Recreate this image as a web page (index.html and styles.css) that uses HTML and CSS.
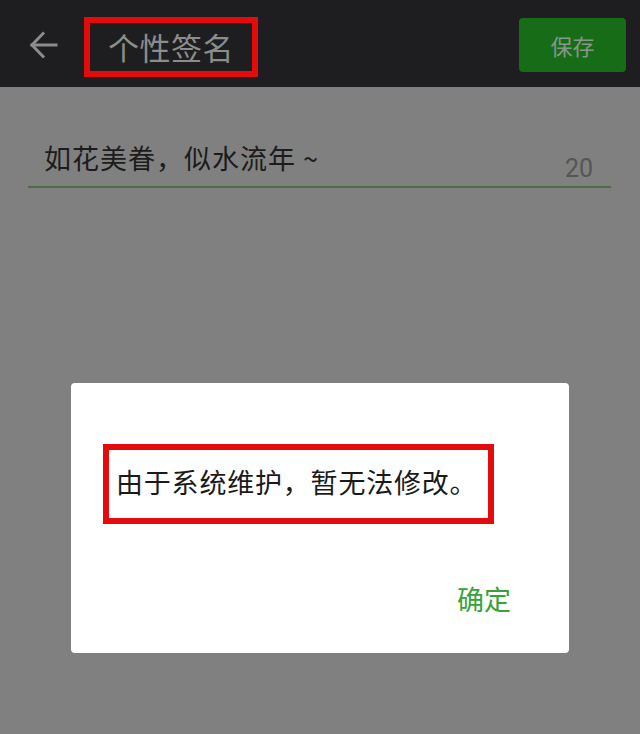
FILE: index.html
```html
<!DOCTYPE html>
<html lang="zh-CN">
<head>
<meta charset="utf-8">
<title>个性签名</title>
<link rel="stylesheet" href="styles.css">
</head>
<body>
<header class="header">
  <span class="back">
    <svg width="29" height="28" viewBox="0 0 29 28" fill="none" stroke="#8c8c8c" stroke-width="3" stroke-linecap="square">
      <path d="M3 14 H27"/>
      <path d="M14 2.5 L3 14 L14 25.5"/>
    </svg>
  </span>
  <div class="title-box"><span class="title">个性签名</span></div>
  <button class="save">保存</button>
</header>
<main class="content">
  <div class="field">
    <span class="field-text">如花美眷，似水流年 ~</span>
    <span class="count">20</span>
  </div>
</main>
<div class="overlay">
  <div class="dialog">
    <div class="msg-box"><span class="msg">由于系统维护，暂无法修改。</span></div>
    <div class="actions"><span class="ok">确定</span></div>
  </div>
</div>
</body>
</html>
```
FILE: styles.css
```css
* { box-sizing: border-box; }
html, body { margin: 0; padding: 0; }
body {
  width: 640px;
  height: 734px;
  background: #808080;
  font-family: "Noto Sans CJK SC", "Noto Sans", sans-serif;
  overflow: hidden;
}
.header {
  display: flex;
  align-items: flex-start;
  height: 87px;
  background: #1e1e20;
  padding: 0 14px 0 29px;
}
.back {
  display: block;
  width: 29px;
  height: 28px;
  margin-top: 31px;
}
.back svg { display: block; }
.title-box {
  margin-left: 26px;
  margin-top: 17px;
  width: 174px;
  height: 60px;
  border: 6px solid #e30b0b;
  display: flex;
  align-items: center;
  padding-left: 18px;
}
.title {
  font-size: 31px;
  line-height: 40px;
  letter-spacing: 0.5px;
  color: #8c8c8c;
}
.save {
  margin-left: auto;
  margin-top: 18px;
  width: 107px;
  height: 54px;
  border: none;
  border-radius: 4px;
  background: #176c17;
  color: #86988a;
  font-family: "Noto Sans CJK SC", "Noto Sans", sans-serif;
  font-size: 22px;
  line-height: 30px;
  padding: 0;
}
.content {
  padding: 53px 29px 0 28px;
}
.field {
  display: flex;
  justify-content: space-between;
  align-items: flex-start;
  height: 48px;
  border-bottom: 2px solid #4d6e45;
  padding: 0 18px 0 16px;
}
.field-text {
  font-size: 27px;
  line-height: 36px;
  letter-spacing: 1px;
  color: #1c1c1c;
}
.count {
  margin-top: 16px;
  font-family: Roboto, "Noto Sans", sans-serif;
  font-size: 25px;
  line-height: 25px;
  color: #555555;
}
.overlay {
  position: fixed;
  inset: 0;
  display: flex;
  justify-content: center;
  align-items: flex-start;
  padding-top: 383px;
}
.dialog {
  width: 498px;
  height: 270px;
  background: #ffffff;
  border-radius: 4px;
  padding: 61px 58px 0 32px;
}
.msg-box {
  width: 391px;
  height: 80px;
  border: 6px solid #e30b0b;
  display: flex;
  align-items: center;
  padding-left: 7px;
  padding-bottom: 5px;
}
.msg {
  font-size: 27px;
  line-height: 36px;
  letter-spacing: 0.8px;
  color: #1a1a1a;
}
.actions {
  display: flex;
  justify-content: flex-end;
  margin-top: 57px;
}
.ok {
  font-size: 27px;
  line-height: 36px;
  color: #36a336;
}
```
